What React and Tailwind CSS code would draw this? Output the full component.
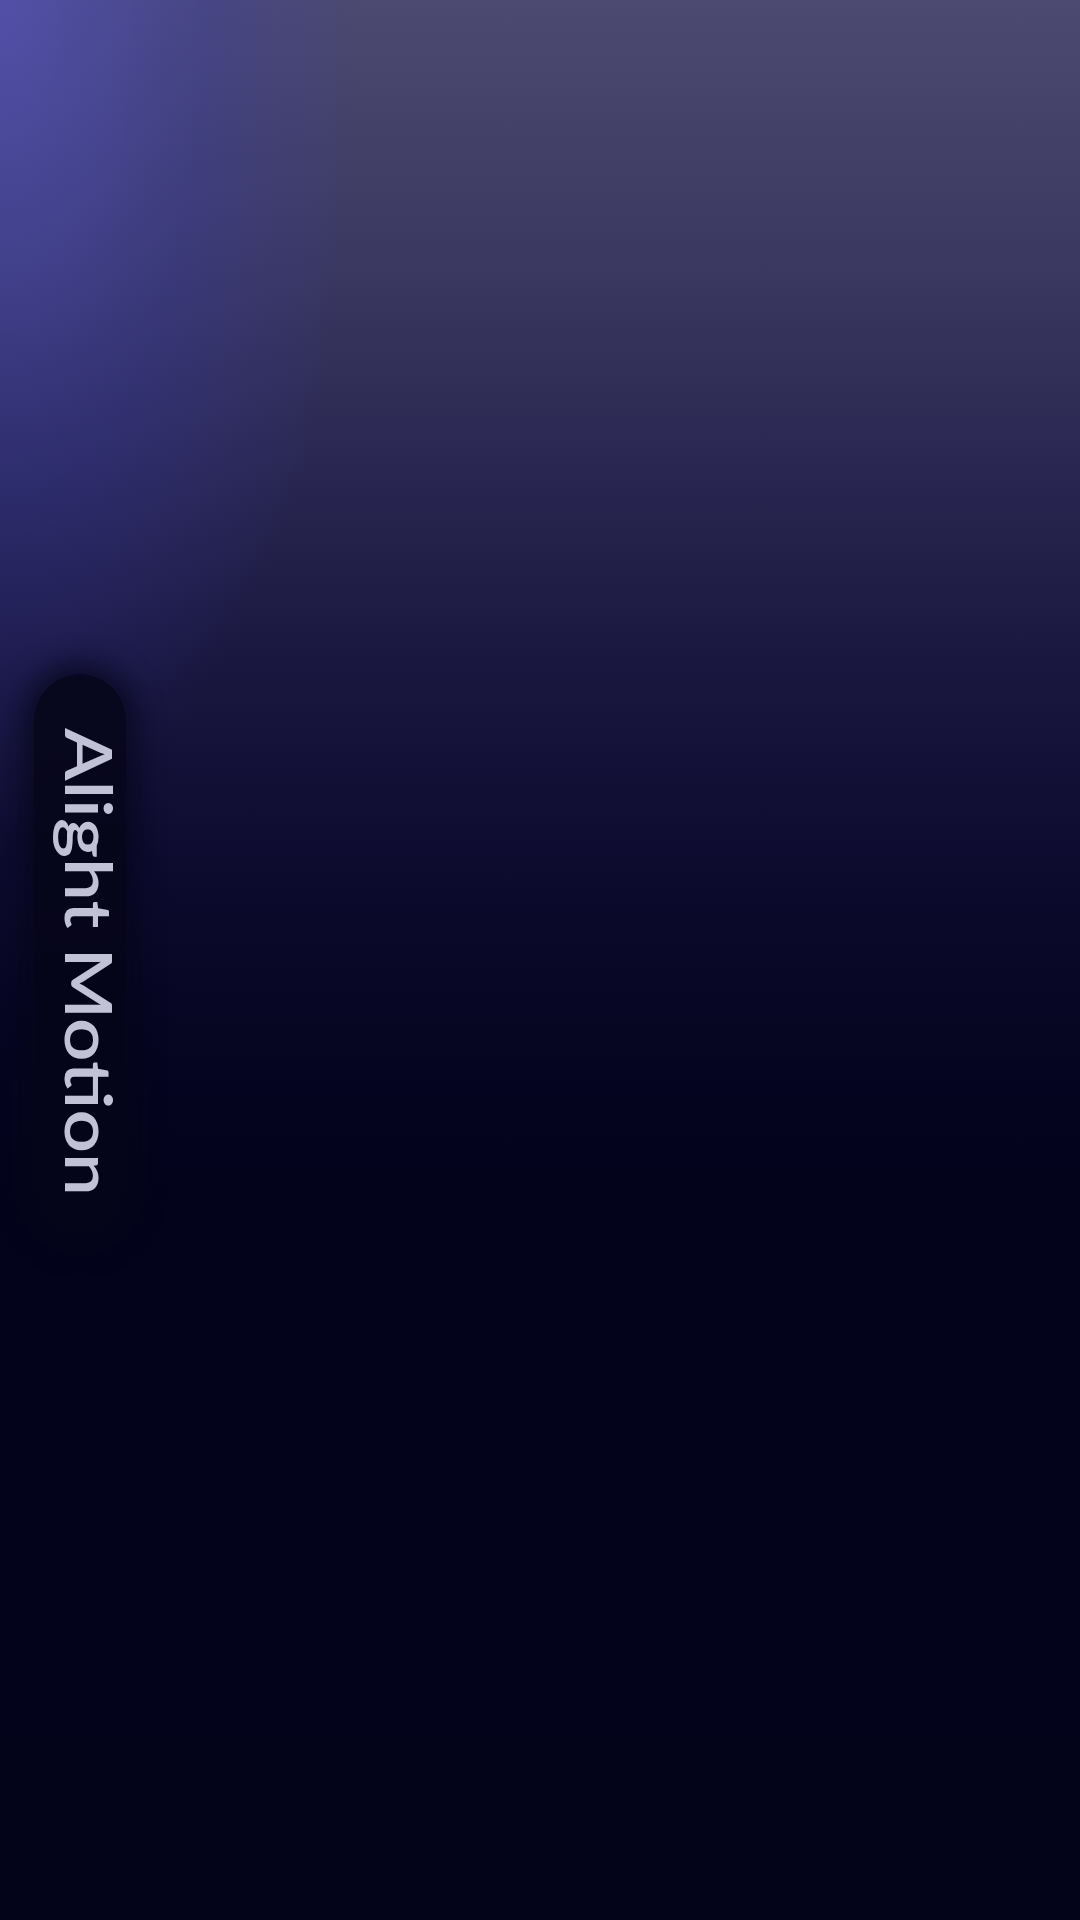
import React from 'react';

const App = () => {
  return (
    <div
      className="relative w-[1080px] h-[1920px] overflow-hidden font-['Lato',sans-serif] bg-[radial-gradient(ellipse_460px_1050px_at_0%_0%,rgba(84,84,205,0.6),rgba(60,60,185,0.28)_45%,transparent_80%),linear-gradient(180deg,#4c4a70_0%,#3a3860_14%,#2a2852_24%,#1a1840_34%,#0e0c30_44%,#070624_52%,#03031c_62%,#03031a_100%)]"
    >
      {/* Vertical label */}
      <div className="pl-[34px] pt-[674px]">
        <div className="w-[92px] h-[562px] rounded-full bg-[#05051a]/90 shadow-[0_0_26px_12px_rgba(5,5,26,0.7)] flex items-start justify-center pt-[54px]">
          <span className="ml-[20px] [writing-mode:vertical-rl] origin-top scale-y-[1.16] text-[66px] leading-none font-semibold text-[#c2c2d6] whitespace-nowrap">
            Alight Motion
          </span>
        </div>
      </div>
    </div>
  );
};

export default App;
